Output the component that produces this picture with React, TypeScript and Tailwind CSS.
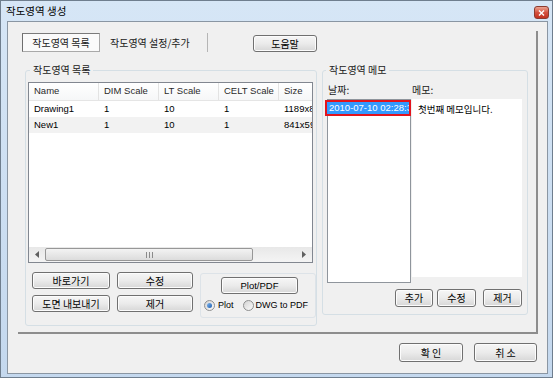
import React from 'react';

const kr = { fontFamily: '"Noto Sans CJK KR", "Noto Sans", sans-serif' };
const en = { fontFamily: '"Liberation Sans", "Noto Sans CJK KR", sans-serif' };

const btnBase =
  'flex items-center justify-center rounded-[3px] border border-[#707070] bg-gradient-to-b from-[#f6f6f6] via-[#ebebeb] to-[#d7d7d7] text-black leading-none shadow-[inset_0_0_0_1px_#fcfcfc]';

function Btn({ label, className, font = kr }: { label: string; className: string; font?: React.CSSProperties }) {
  return (
    <div className={`${btnBase} ${className}`} style={font}>
      {label}
    </div>
  );
}

function Radio({ checked }: { checked?: boolean }) {
  return (
    <div className="flex h-[11px] w-[11px] items-center justify-center rounded-full border border-[#8e8f8f] bg-gradient-to-br from-[#d4d4d4] to-[#fbfbfb]">
      {checked && <div className="h-[5px] w-[5px] rounded-full bg-gradient-to-br from-[#7fb6ee] to-[#1d5fb0]" />}
    </div>
  );
}

const cols = ['Name', 'DIM Scale', 'LT Scale', 'CELT Scale', 'Size'];
const widths = ['w-[70px]', 'w-[60px]', 'w-[60px]', 'w-[60px]', 'w-[60px]'];
const rows = [
  ['Drawing1', '1', '10', '1', '1189x841'],
  ['New1', '1', '10', '1', '841x594'],
];

export default function App() {
  return (
    <div className="flex h-[378px] w-[553px] flex-col overflow-hidden border border-[#6f7e8e] bg-gradient-to-b from-[#d6e6f6] to-[#c4d8ee]">
      {/* title bar */}
      <div className="flex h-[20px] items-center justify-between pl-[5px] pr-[3px]">
        <span className="text-[10.5px] text-black" style={kr}>
          작도영역 생성
        </span>
        <div className="mt-[3px] flex h-[13px] w-[15px] items-center justify-center rounded-[3px] border border-[#8c3b30] bg-gradient-to-b from-[#eaa392] via-[#d4513f] to-[#c2301f]">
          <svg width="7" height="6" viewBox="0 0 7 6">
            <path d="M1 0.5 L6 5.5 M6 0.5 L1 5.5" stroke="#fff" strokeWidth="1.4" />
          </svg>
        </div>
      </div>

      {/* client area */}
      <div className="ml-[6px] mr-[4px] flex h-[353px] flex-col border border-[#8a96a3] bg-[#f0f0f0]">
        {/* tab pane */}
        <div className="ml-[10px] mt-[9px] flex h-[303px] w-[520px] flex-col border-b-2 border-r-2 border-[#8d8d8d]">
          {/* tabs */}
          <div className="mt-[2px] flex h-[19px] items-stretch">
            <div
              className="ml-[4px] flex w-[78px] items-center justify-center border border-[#a9a9a9] border-l-[#6e6e6e] border-t-[#7a7a7a] bg-[#fafafa] text-[10px] text-[#1a1a1a]"
              style={kr}
            >
              작도영역 목록
            </div>
            <div className="flex w-[108px] items-center border-r border-[#b5b5b5] pl-[10px] text-[10px] text-[#1a1a1a]" style={kr}>
              작도영역 설정/추가
            </div>
            <Btn label="도움말" className="ml-[45px] mt-[2px] h-[17px] w-[64px] text-[10px]" />
          </div>

          <div className="flex items-start">
            {/* group 1 */}
            <fieldset className="ml-[7px] mt-[11px] w-[292px] rounded-[3px] border border-[#d5dfe5] pb-[7px] pl-[2px]">
              <legend className="ml-[2px] px-[3px] text-[10px] leading-[14px] text-[#1a1a1a]" style={kr}>
                작도영역 목록
              </legend>
              {/* list view */}
              <div className="mt-[5px] flex h-[181px] w-[285px] flex-col overflow-hidden border border-[#828790] bg-white" style={en}>
                <div className="flex h-[18px] shrink-0 border-b border-[#e5e5e5] bg-gradient-to-b from-white to-[#f6f7f8]">
                  {cols.map((c, i) => (
                    <div
                      key={c}
                      className={`${widths[i]} flex shrink-0 items-center whitespace-nowrap border-r border-[#e3e3e3] pl-[5px] text-[9.5px] text-[#2a2a2a]`}
                    >
                      {c}
                    </div>
                  ))}
                </div>
                {rows.map((r, ri) => (
                  <div key={ri} className={`flex h-[16px] shrink-0 ${ri === 1 ? 'bg-[#f2f2f2]' : 'bg-white'}`}>
                    {r.map((v, i) => (
                      <div key={i} className={`${widths[i]} flex shrink-0 items-center whitespace-nowrap pl-[5px] text-[9.5px] text-black`}>
                        {v}
                      </div>
                    ))}
                  </div>
                ))}
                <div className="flex-1" />
                {/* horizontal scrollbar */}
                <div className="flex h-[15px] shrink-0 items-center bg-gradient-to-b from-[#e8e8e8] to-[#f4f4f4]">
                  <div className="flex w-[16px] items-center justify-center">
                    <svg width="4" height="7" viewBox="0 0 4 7">
                      <path d="M4 0 L0 3.5 L4 7 Z" fill="#606060" />
                    </svg>
                  </div>
                  <div className="flex h-[13px] w-[208px] items-center justify-center rounded-[2px] border border-[#979797] bg-gradient-to-b from-[#f3f3f3] to-[#dcdcdc]">
                    <svg width="7" height="6" viewBox="0 0 7 6">
                      <path d="M0.5 0 V6 M3.5 0 V6 M6.5 0 V6" stroke="#8a8a8a" strokeWidth="1" />
                    </svg>
                  </div>
                  <div className="flex-1" />
                  <div className="flex w-[16px] items-center justify-center">
                    <svg width="4" height="7" viewBox="0 0 4 7">
                      <path d="M0 0 L4 3.5 L0 7 Z" fill="#606060" />
                    </svg>
                  </div>
                </div>
              </div>

              {/* buttons under list */}
              <div className="ml-[4px] mt-[9px] flex items-start">
                <div className="grid grid-cols-[78px_76px] gap-x-[7px] gap-y-[6px]">
                  <Btn label="바로가기" className="h-[17px] text-[10px]" />
                  <Btn label="수정" className="h-[17px] text-[10px]" />
                  <Btn label="도면 내보내기" className="h-[17px] text-[10px]" />
                  <Btn label="제거" className="h-[17px] text-[10px]" />
                </div>
                <div className="ml-[7px] mt-[1px] flex h-[45px] w-[116px] flex-col rounded-[3px] border border-[#dde3e8]">
                  <Btn label="Plot/PDF" font={en} className="ml-[20px] mt-[3px] h-[17px] w-[77px] text-[9.5px]" />
                  <div className="mt-[5px] flex items-center pl-[3px] text-[9px] text-black" style={en}>
                    <Radio checked />
                    <span className="ml-[3px]">Plot</span>
                    <div className="ml-[9px]">
                      <Radio />
                    </div>
                    <span className="ml-[2px] whitespace-nowrap">DWG to PDF</span>
                  </div>
                </div>
              </div>
            </fieldset>

            {/* group 2 */}
            <fieldset className="ml-[5px] mt-[11px] w-[206px] rounded-[3px] border border-[#d5dfe5] pb-[7px]">
              <legend className="ml-[3px] px-[3px] text-[10px] leading-[14px] text-[#1a1a1a]" style={kr}>
                작도영역 메모
              </legend>
              <div className="mt-[7px] flex text-[10px] leading-[12px] text-[#1a1a1a]" style={kr}>
                <span className="ml-[5px] w-[84px]">날짜:</span>
                <span>메모:</span>
              </div>
              <div className="mt-[3px] flex items-start">
                <div className="ml-[4px] flex h-[184px] w-[84px] flex-col border border-[#8f959c] bg-white">
                  <div
                    className="-ml-[3px] -mr-[1px] h-[16px] overflow-hidden whitespace-nowrap border-2 border-[#e3141d] bg-[#3399ff] pl-[2px] text-[9.5px] leading-[12px] text-white"
                    style={en}
                  >
                    2010-07-10 02:28:35
                  </div>
                </div>
                <div className="ml-[1px] h-[178px] w-[110px] bg-white pl-[6px] pt-[3px] text-[9.5px] text-black" style={kr}>
                  첫번째 메모입니다.
                </div>
              </div>
              <div className="mt-[6px] flex justify-end pr-[5px]">
                <Btn
                  label="추가"
                  className="h-[18px] w-[38px] border-[#3c7fb1] text-[10px] shadow-[inset_0_0_0_1px_#93c9ef]"
                />
                <Btn label="수정" className="ml-[4px] h-[18px] w-[39px] text-[10px]" />
                <Btn label="제거" className="ml-[7px] h-[18px] w-[39px] text-[10px]" />
              </div>
            </fieldset>
          </div>
        </div>

        {/* dialog buttons */}
        <div className="mt-[9px] flex justify-end pr-[10px]">
          <Btn label="확 인" className="h-[19px] w-[64px] text-[10px]" />
          <Btn label="취 소" className="ml-[11px] h-[19px] w-[63px] text-[10px]" />
        </div>
      </div>
    </div>
  );
}
